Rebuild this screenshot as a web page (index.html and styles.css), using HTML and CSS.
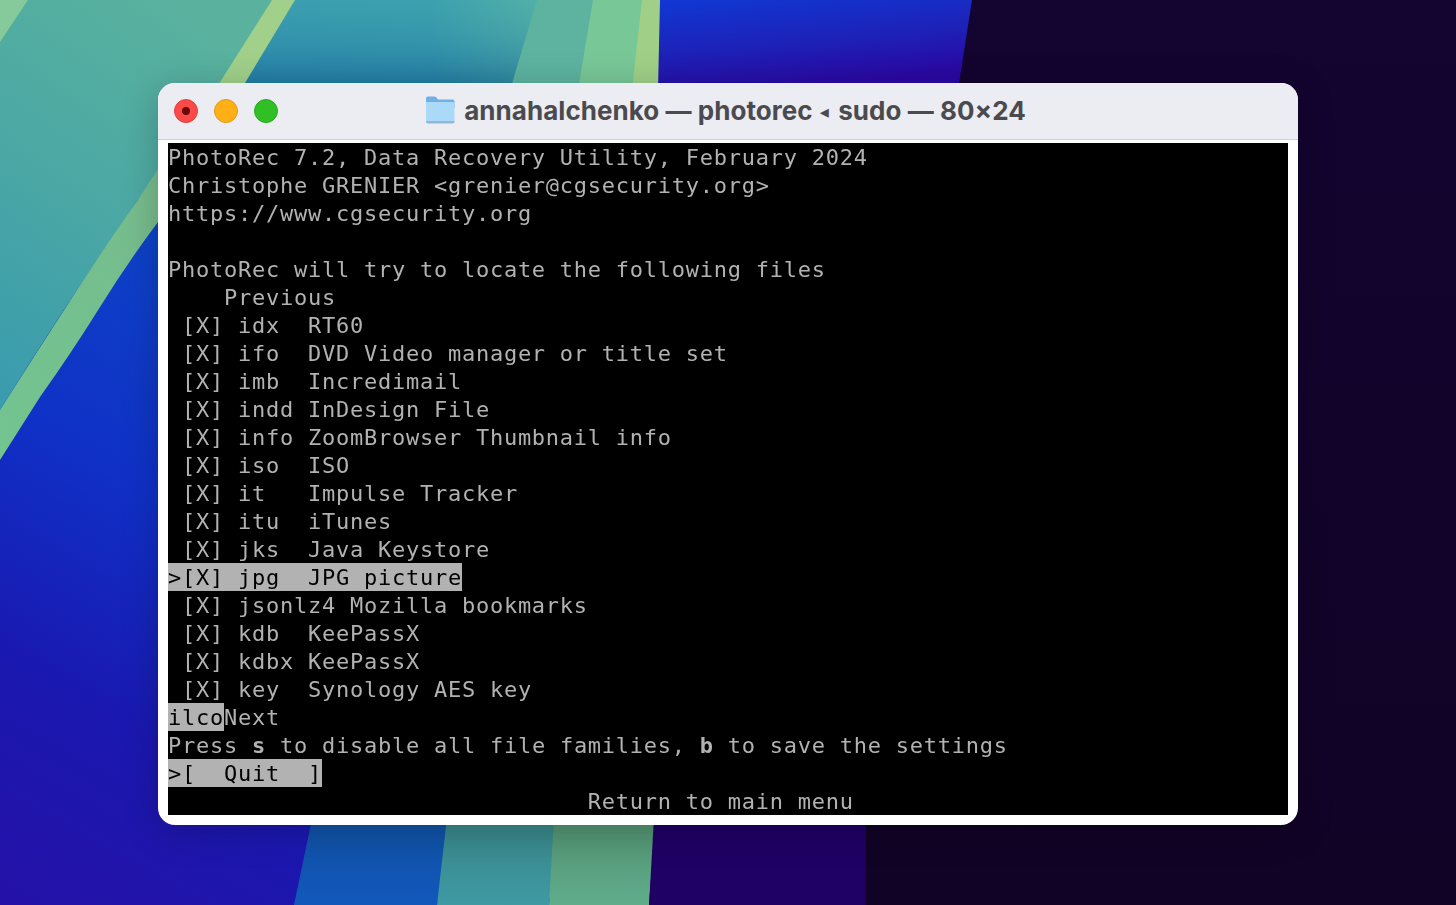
FILE: index.html
```html
<!DOCTYPE html>
<html lang="en">
<head>
<meta charset="utf-8">
<title>annahalchenko — photorec ◂ sudo — 80×24</title>
<link rel="stylesheet" href="styles.css">
</head>
<body>
<svg class="wallpaper" viewBox="0 0 1456 905" preserveAspectRatio="none" aria-hidden="true">
  <defs>
    <linearGradient id="night" x1="0" y1="0" x2="0" y2="1">
      <stop offset="0" stop-color="#130430"/>
      <stop offset="1" stop-color="#110326"/>
    </linearGradient>
    <linearGradient id="teal" x1="0.6" y1="0" x2="0.1" y2="1">
      <stop offset="0" stop-color="#5ab29e"/>
      <stop offset="0.5" stop-color="#4ba8a4"/>
      <stop offset="1" stop-color="#3a9cae"/>
    </linearGradient>
    <linearGradient id="deep" x1="0.4" y1="0" x2="0.1" y2="1">
      <stop offset="0" stop-color="#0d48c8"/>
      <stop offset="0.42" stop-color="#1030c6"/>
      <stop offset="0.72" stop-color="#1a18b0"/>
      <stop offset="1" stop-color="#2412a8"/>
    </linearGradient>
    <linearGradient id="sky" x1="0" y1="0" x2="1" y2="0">
      <stop offset="0" stop-color="#2f92b0"/>
      <stop offset="0.65" stop-color="#3096ae"/>
      <stop offset="1" stop-color="#4eaba4"/>
    </linearGradient>
    <linearGradient id="skyshade" x1="0" y1="0" x2="0" y2="1">
      <stop offset="0" stop-color="#5fc0b0" stop-opacity="0.25"/>
      <stop offset="1" stop-color="#0d5a98" stop-opacity="0.5"/>
    </linearGradient>
    <linearGradient id="topblue" x1="0" y1="0" x2="0.35" y2="1">
      <stop offset="0" stop-color="#1038d4"/>
      <stop offset="0.55" stop-color="#1d22b8"/>
      <stop offset="1" stop-color="#2a08a2"/>
    </linearGradient>
    <linearGradient id="bottomblue" x1="0" y1="0" x2="0" y2="1">
      <stop offset="0" stop-color="#0f4f9c"/>
      <stop offset="1" stop-color="#1258bc"/>
    </linearGradient>
    <linearGradient id="bottomteal" x1="0" y1="0" x2="0" y2="1">
      <stop offset="0" stop-color="#367f80"/>
      <stop offset="1" stop-color="#3f9aa4"/>
    </linearGradient>
    <linearGradient id="bottomgreen" x1="0" y1="0" x2="0" y2="1">
      <stop offset="0" stop-color="#4d8a68"/>
      <stop offset="1" stop-color="#60ad8c"/>
    </linearGradient>
    <linearGradient id="stripe" x1="1" y1="0" x2="0" y2="1">
      <stop offset="0" stop-color="#78ba8c"/>
      <stop offset="1" stop-color="#72c490"/>
    </linearGradient>
  </defs>
  <rect width="1456" height="905" fill="url(#night)"/>
  <rect y="160" width="400" height="745" fill="url(#deep)"/>
  <path fill="url(#teal)" d="M0 0H300L240 90H170V180L138 200Q107 245 77 290T0 410Z"/>
  <path fill="#86c99a" d="M0 0H28L0 42Z"/>
  <path fill="url(#stripe)" d="M170 150H190V190L158 222Q128 262 100 307T40 397L0 460V410Q38 350 77 290T138 200Z"/>
  <path fill="url(#sky)" d="M285 0H540L510 90H225Z"/>
  <path fill="url(#skyshade)" d="M285 0H540L510 90H225Z"/>
  <path fill="#5db3a0" d="M537 0H596L581 90H510Z"/>
  <path fill="#78c797" d="M593 0H644L634 90H578Z"/>
  <path fill="url(#topblue)" d="M655 0H972L958 90H655Z"/>
  <path fill="#a0d088" d="M642 0H660L658 90H632Z"/>
  <path fill="#a0d08a" d="M272 0H295L245 83 235 90H215Z"/>
  <path fill="url(#bottomblue)" d="M316 800H456L437 905H294Z"/>
  <path fill="url(#bottomteal)" d="M449 800H561L549 905H437Z"/>
  <path fill="url(#bottomgreen)" d="M555 800H657L649 905H549Z"/>
  <path fill="#1f0064" d="M655 800H866V905H649Z"/>
</svg>

<main class="window">
  <header class="titlebar">
    <div class="lights">
      <span class="light light-close"><span class="light-dot"></span></span>
      <span class="light light-min"></span>
      <span class="light light-max"></span>
    </div>
    <div class="title">
      <svg class="folder" viewBox="0 0 30 28" aria-hidden="true">
        <path fill="#6fb0e6" d="M1 2.500C1 1.200 1.800 0.500 3 0.500H9.500C10.500 0.500 11 1 11.800 2L13 3.500H27.500C28.800 3.500 29.500 4.300 29.500 5.500V12H1Z"/>
        <path fill="#aadaf8" d="M1 6H27.500C28.700 6 29.500 6.800 29.500 8V24.500C29.500 25.800 28.700 26.500 27.500 26.500H3C1.800 26.500 1 25.800 1 24.500Z"/>
        <path fill="#8db9d8" d="M1 25H29.500V25.500C29.500 26.800 28.700 27.500 27.500 27.500H3C1.800 27.500 1 26.800 1 25.500Z"/>
      </svg>
      <span class="title-text">annahalchenko — photorec <span class="caret">◂</span> sudo — 80×24</span>
    </div>
  </header>
  <div class="content">
    <div class="terminal">
      <div class="row">PhotoRec 7.2, Data Recovery Utility, February 2024</div>
      <div class="row">Christophe GRENIER &lt;grenier@cgsecurity.org&gt;</div>
      <div class="row">https://www.cgsecurity.org</div>
      <div class="row"> </div>
      <div class="row">PhotoRec will try to locate the following files</div>
      <div class="row">    Previous</div>
      <div class="row"> [X] idx  RT60</div>
      <div class="row"> [X] ifo  DVD Video manager or title set</div>
      <div class="row"> [X] imb  Incredimail</div>
      <div class="row"> [X] indd InDesign File</div>
      <div class="row"> [X] info ZoomBrowser Thumbnail info</div>
      <div class="row"> [X] iso  ISO</div>
      <div class="row"> [X] it   Impulse Tracker</div>
      <div class="row"> [X] itu  iTunes</div>
      <div class="row"> [X] jks  Java Keystore</div>
      <div class="row"><span class="sel">&gt;[X] jpg  JPG picture</span></div>
      <div class="row"> [X] jsonlz4 Mozilla bookmarks</div>
      <div class="row"> [X] kdb  KeePassX</div>
      <div class="row"> [X] kdbx KeePassX</div>
      <div class="row"> [X] key  Synology AES key</div>
      <div class="row"><span class="sel">ilco</span>Next</div>
      <div class="row">Press <b class="key">s</b> to disable all file families, <b class="key">b</b> to save the settings</div>
      <div class="row"><span class="sel">&gt;[  Quit  ]</span></div>
      <div class="row">                              Return to main menu</div>
    </div>
  </div>
</main>
</body>
</html>
```
FILE: styles.css
```css
html, body {
  margin: 0;
  height: 100%;
}

body {
  position: relative;
  overflow: hidden;
  background: #130430;
  box-sizing: border-box;
  padding: 83px 158px 80px;
}

.wallpaper {
  position: absolute;
  inset: 0;
  width: 100%;
  height: 100%;
}

.window {
  position: relative;
  width: 1140px;
  height: 742px;
  display: flex;
  flex-direction: column;
  border-radius: 17px;
  overflow: hidden;
  background: #fff;
  box-shadow: 0 6px 36px rgba(0, 0, 0, 0.22);
}

.titlebar {
  position: relative;
  flex: none;
  height: 56px;
  display: flex;
  align-items: center;
  justify-content: center;
  background: #ecedf2;
  border-bottom: 1px solid #d2d2d4;
}

.lights {
  position: absolute;
  left: 16px;
  top: 16px;
  display: flex;
  gap: 16px;
}

.light {
  width: 24px;
  height: 24px;
  border-radius: 50%;
  box-sizing: border-box;
  display: flex;
  align-items: center;
  justify-content: center;
}

.light-close { background: #fc4a48; border: 1px solid #e0403c; }
.light-min { background: #ffb016; border: 1px solid #e09a18; }
.light-max { background: #30c026; border: 1px solid #2aa822; }

.light-dot {
  width: 8px;
  height: 8px;
  border-radius: 50%;
  background: #6a0808;
}

.title {
  display: flex;
  align-items: center;
  gap: 9px;
  margin-left: -5px;
}

.folder {
  width: 30px;
  height: 28px;
  flex: none;
  transform: translateY(-1px);
}

.title-text {
  font-family: Inter, "Liberation Sans", sans-serif;
  font-weight: 700;
  font-size: 26px;
  line-height: 34px;
  letter-spacing: 0.05px;
  color: #4b4a4f;
  white-space: pre;
}

.caret {
  display: inline-block;
  margin: 0 3px 0 1px;
  font-family: "DejaVu Sans", sans-serif;
  font-size: 18px;
  line-height: 20px;
  transform: translateY(-2px);
}

.content {
  flex: 1;
  padding: 3px 10px 10px;
  min-height: 0;
}

.terminal {
  background: #000;
  height: 672px;
  color: #b2b2b2;
  font-family: "DejaVu Sans Mono", "Liberation Mono", monospace;
  font-size: 22px;
  letter-spacing: 0.75px;
  filter: blur(0.3px);
}

.row {
  height: 28px;
  line-height: 30px;
  white-space: pre;
}

.sel {
  display: inline-block;
  height: 28px;
  background: #b2b2b2;
  color: #000;
}

.key {
  font-weight: 700;
}
```
